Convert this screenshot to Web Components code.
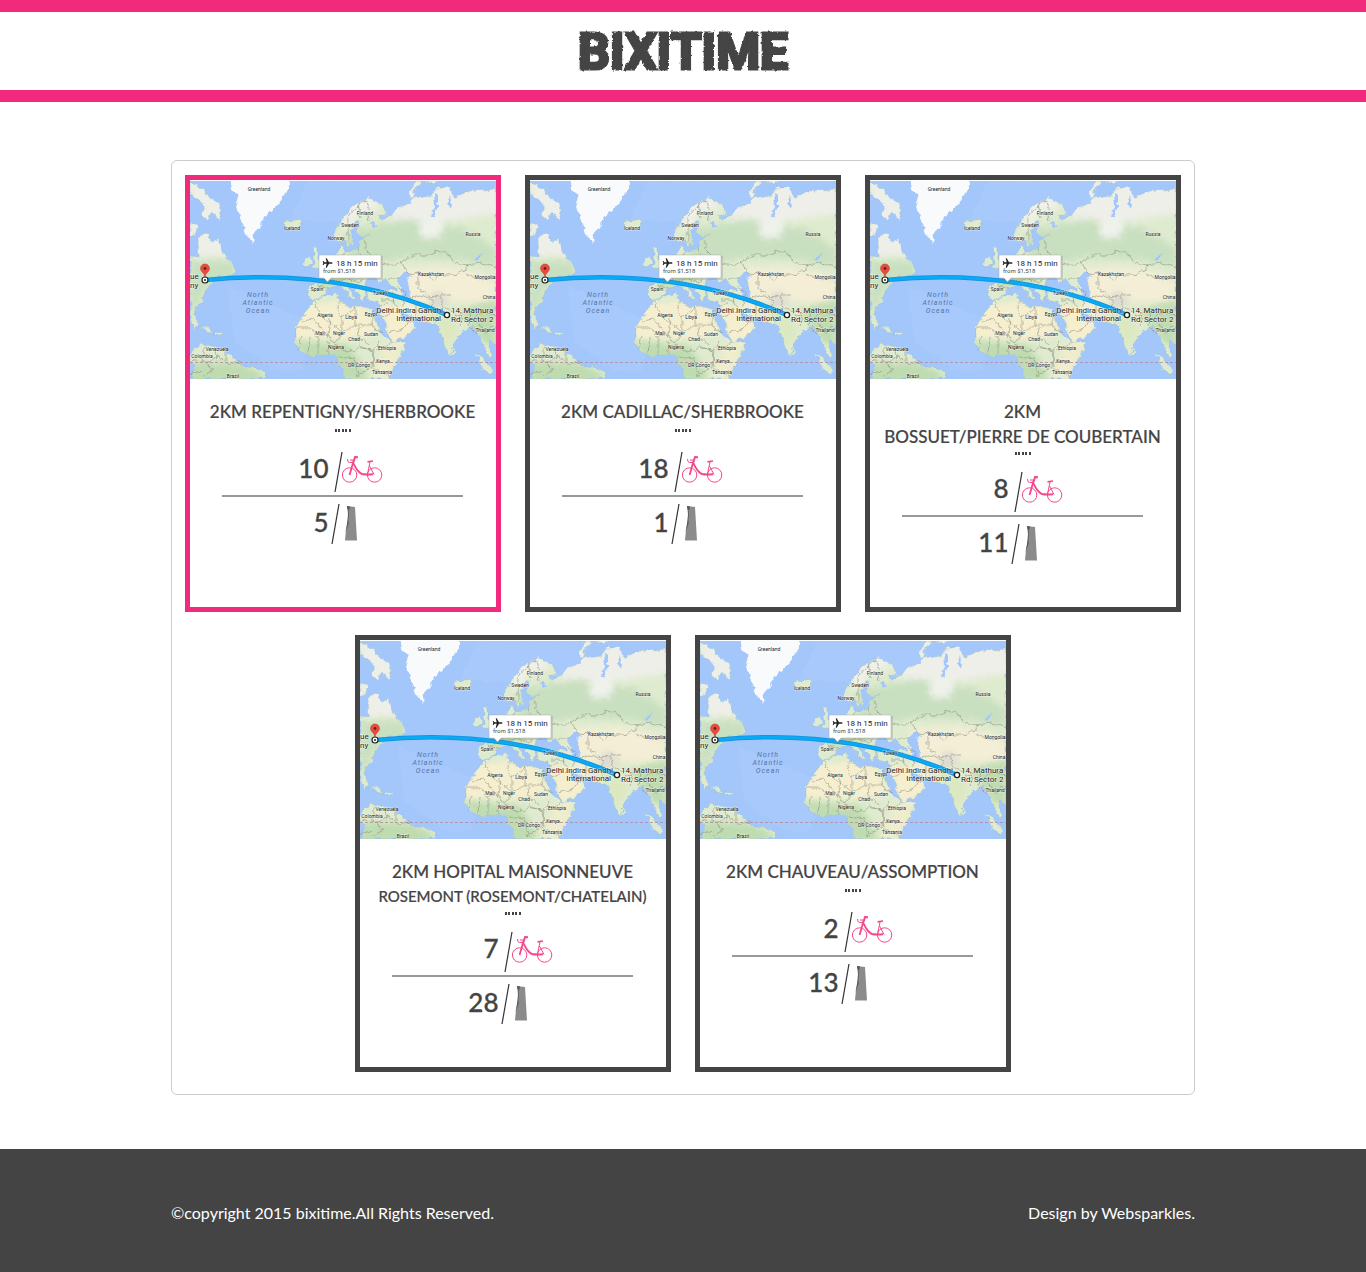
<!DOCTYPE html>
<html lang="en">
<head>
<meta charset="utf-8">
<meta name="viewport" content="width=device-width, initial-scale=1">
<title>Bixitime</title>
<style>
body{margin:0;background:#fff;color:#444;font-family:Lato,"Open Sans",sans-serif;--pink:#f22a7b;--dark:#444}
</style>
</head>
<body>
<bixi-header>BIXITIME</bixi-header>
<bixi-panel>
  <station-card active bikes="10" docks="5">2KM REPENTIGNY/SHERBROOKE</station-card>
  <station-card bikes="18" docks="1">2KM CADILLAC/SHERBROOKE</station-card>
  <station-card two-line bikes="8" docks="11">2KM<br>BOSSUET/PIERRE DE COUBERTAIN</station-card>
  <station-card two-line bikes="7" docks="28">2KM HOPITAL MAISONNEUVE<span slot="sub">ROSEMONT (ROSEMONT/CHATELAIN)</span></station-card>
  <station-card bikes="2" docks="13">2KM CHAUVEAU/ASSOMPTION</station-card>
</bixi-panel>
<bixi-footer><span>©copyright 2015 bixitime.All Rights Reserved.</span><span slot="credit">Design by Websparkles.</span></bixi-footer>

<template id="header-t">
<style>
:host{display:flex;justify-content:center;align-items:center;box-sizing:border-box;height:102px;padding-top:3px;border:solid var(--pink);border-width:12px 0}
h1{margin:0;font:bold 50px/75px Roboto,sans-serif;color:var(--dark);-webkit-text-stroke:3px var(--dark);filter:url(#rough)}
svg{position:absolute}
</style>
<svg width="0" height="0" aria-hidden="true"><filter id="rough" x="-5%" y="-5%" width="110%" height="110%"><feTurbulence type="fractalNoise" baseFrequency=".3" numOctaves="2" seed="4"/><feDisplacementMap in="SourceGraphic" scale="3" xChannelSelector="R" yChannelSelector="G"/></filter></svg>
<h1><slot></slot></h1>
</template>

<template id="panel-t">
<style>
:host{display:flex;flex-wrap:wrap;justify-content:center;gap:23px 24px;box-sizing:border-box;max-width:1024px;margin:58px auto 54px;padding:14px 13px 22px 12px;border:1px solid #ccc;border-radius:6px}
</style>
<slot></slot>
</template>

<template id="footer-t">
<style>
:host{display:block;background:var(--dark);color:#fff;font-size:16px;line-height:20px;padding:54px 24px 49px}
div{max-width:1024px;margin:auto;display:flex;justify-content:space-between}
</style>
<div><slot></slot><slot name="credit"></slot></div>
</template>

<template id="card-t">
<style>
:host{display:block;box-sizing:border-box;width:316px;min-height:437px;border:5px solid var(--dark);padding-top:1px}
:host([active]){border-color:var(--pink)}
h2{margin:20px 0 0;font-size:17px;line-height:25px;font-weight:500;text-align:center;-webkit-text-stroke:.2px}
h2 ::slotted(span){display:block}
slot[name=sub]{font-size:15px}
.dots{display:flex;justify-content:space-between;align-items:center;width:16px;height:12px;margin:0 auto 16px}
:host([two-line]) .dots{height:8px;margin-bottom:15px}
.dots i{width:2px;height:3px;background:var(--dark)}
.row{display:grid;grid-template-columns:141px 1fr;height:40px}
.row b{padding-right:2px;font-size:26px;line-height:36px;font-weight:500;text-align:right;-webkit-text-stroke:.3px}
.row.bikes b{line-height:32px}
.row svg{display:block}
hr{width:241px;height:2px;margin:3px auto 7px;border:0;background:#999}
</style>
<route-map></route-map>
<h2><slot></slot><slot name="sub"></slot></h2>
<div class="dots"><i></i><i></i><i></i><i></i><i></i></div>
<div class="row bikes"><b id="bikes"></b>
<svg width="60" height="40" fill="none" stroke="#f5478c" role="img" aria-label="bikes"><path d="M11 0L4 40" stroke="#333" stroke-width="1.2"/><circle cx="18.600" cy="23" r="7.200"/><circle cx="43.600" cy="23" r="7.200"/><path d="M18.600 23L22.500 9" stroke-width="1.800"/><path d="M22 10.500C24 14 26 20 31 22q3 .8 11 .3" stroke-width="1.900"/><path d="M27 5.200l-3-.2-1.500 5" stroke-width="2"/><path d="M16.500 7q0 3.500 2 3.500h3.500M19 8h3M39 10l-2.500 12M38.500 14l4.500 8.500" stroke-width="1"/><path d="M36.500 9.800l5.500-.8" stroke-width="1.700"/></svg></div>
<hr>
<div class="row"><b id="docks"></b>
<svg width="60" height="40" role="img" aria-label="docks"><path d="M8 0L1 40" stroke="#333" stroke-width="1.200"/><path d="M16 2l8 1 2 33.500H14l1-11 2.500-10z" fill="#8b8b8b"/><path d="M16 2l3 .500-1 4L17.500 20 14.500 28l1.500-8 1.500-14-1-1z" fill="#555"/></svg></div>
</template>

<template id="map-t">
<style>
:host{display:block}
svg{display:block;width:100%;height:198px;font-family:Roboto,sans-serif}
.s{font-size:5px;fill:#222;text-anchor:middle;stroke:#fff;stroke-width:1px;stroke-opacity:.5;paint-order:stroke}
.o{font-size:7px;font-style:italic;fill:#5673a5;text-anchor:middle;letter-spacing:1px}
.p{font-size:8px;fill:#222;stroke:#fff;stroke-width:1px;stroke-opacity:.6;paint-order:stroke}
</style>
<svg viewBox="0 0 306 198" preserveAspectRatio="xMidYMid slice" role="img" aria-label="Route map">
<defs>
<filter id="coast" x="0" y="0" width="100%" height="100%"><feTurbulence type="fractalNoise" baseFrequency=".16" numOctaves="3" seed="8"/><feDisplacementMap in="SourceGraphic" scale="6" xChannelSelector="R" yChannelSelector="G"/></filter>
<filter id="soft" x="-30%" y="-30%" width="160%" height="160%"><feGaussianBlur stdDeviation="3"/></filter>
<clipPath id="land"><path id="shape" d="M0 2L8 4 18 14 28 22 31 32 28 40 22 32 18 39 11 33 16 26 8 19 0 12zM0 40l8 5-3 8-5 2zM0 75L9 76 8 56 16 52 23 61 28 57 31 67 41 82 48 91 38 95 28 96 20 104 15 110 12 119 4 129 8 144 5 148 0 138zM8 147l8 0 8 4-4 0zM25 151l7 1-2 2-5 0zM0 171L11 162 21 166 34 169 46 179 53 186 64 186 76 191 74 198H4L2 194 6 184 0 180zM94 42l4-3 5 2 6-2 3 5-6 5-9-1zM123 66l5-1 0 9 4 9-1 5-9-1 3-5zM116 78l5-2 1 6-5 4-3-3zM124 120L135 115 148 112 150 121 160 127 170 125 182 129 186 139 190 151 200 161 216 161 214 167 203 189 199 198H156L154 192 148 182V176L138 172 124 176 111 171 104 162 106 156V146L112 136zM119 104L118 116 126 119 134 115 138 107 146 105 152 105 160 116 165 119 161 110 156 103 160 103 168 112 172 120 176 115 175 107 178 96 186 97 190 101 196 97 202 105 207 109 176 110 177 119 188 121 189 129 196 146 201 162 213 157 226 147 222 141 213 139 208 130 214 131 224 138 240 142 248 145 250 152 255 165 260 175 264 168 266 158 276 148 284 146 289 155 294 166 300 178 303 174 298 164 300 158 306 164V8L279 10 263 16 260 6 246 6 242 14 234 15 223 17 218 22 209 27 199 34 191 40 187 36 194 34 198 32 190 22 179 17 166 22 153 36 144 54 148 60 154 57 158 67 163 62 161 50 166 40 170 39 166 50 170 56 180 54 170 60 168 68 155 71 150 64 149 71 140 82 130 87 136 91 134 103zM219 12L226 0h7l-8 7-3 11zM285 172l7 4 11 13-2 5-9-7zM262 168l3 2 0 4-3 0zM236 0h12l-3 4z"/></clipPath>
</defs>
<rect width="306" height="198" fill="#a3c7fb"/>
<g filter="url(#coast)">
<path d="M116 0h110v40H100zM38 105l80 35-5 50H84l-40-30z" fill="#acccfd" opacity=".4"/>
<path d="M39 -5L41 9 49 14 46 22 49 32 53 46 56 54 63 62 64 52 71 44 74 36 86 26 91 17 99 9V-5z" fill="#f8fafb"/>
<g clip-path="url(#land)">
<rect width="306" height="200" fill="#dfebcf"/>
<g filter="url(#soft)">
<path d="M0 0h40v75H0zM200 0h110v32l-50 8-60 5z" fill="#eeefe8"/>
<path d="M150 20l30-8 10 14-22 8-14 20z" fill="#f0f1ea"/>
<path d="M0 80h45v20L16 106 0 140zM155 50l60-12 60 10 31 20v18l-40-8-48-2-58 10z" fill="#c9e0c0"/>
<path d="M100 124l70-4 20 30-20 7h-66zM190 125l40 2-10 35h-20z" fill="#f6efcf"/>
<path d="M210 88l50-2 30 6 16 12v16l-32 2-30-5-30 14z" fill="#f3eed5"/>
<path d="M100 160l60 4 20 36h-40zM0 180l50 2 25 12-10 8H0zM120 90l50-12v20l-40 10zM270 128l36-10v50l-16-10z" fill="#bfdcb1"/>
<path d="M195 165l20-2-17 36h-18z" fill="#efedcc"/>
<path d="M238 120l30 25-10 25-10-20z" fill="#dce8bf"/>
<circle cx="248" cy="119" r="9" fill="#dedbd1"/>
<path d="M228 45l14-10 12 8-4 14-18 0z" fill="#eff2eb"/>
</g>
<path d="M210 95l7-5 4 5-5 4 5 12-2 8-7-3 0-9-4-6zM226 90h5l-2 5zM244 12l4 2 0 14-5 8-3-2 5-8zM257 22l3-8 2 10-2 3zM285 78l9-6-5 8zM181 42l4-2 1 4-3 1z" fill="#a3c7fb"/>
</g>
<use href="#shape" fill="none" stroke="#8fb5c9" stroke-width=".6" opacity=".6"/>
<path d="M107 147l15 0 4 8 12-1 6 8 8-9 0-16 14-10M124 120l4 10 8 9 16 12 14-7V126M166 144l6 0 12 0M168 145l2 20 12 5 8-9M150 121l-4 7 6 9M140 137l-2 17M112 140l12-2 14 18M112 155l-4 14M120 157l-2 15M128 155l0 18M138 160l0 12M144 165l14 6 10-5 14 3 2 16M150 176l15 2 3 17 14-9 2-17M182 186l18 9M186 170l14-8M183 130l0 18 10 4 M168 157l12 6M0 178l18 3 10-6 10 8 12-2M14 165l0 16 10 8-10 6M26 170l2 10M36 172l0 8M0 194l12-5" fill="none" stroke="#898878" stroke-width=".65" opacity=".8"/>
<path d="M126 105l12 2M140 86l5 16 10-6 14 6 4-7M146 78l9 13 10-2 10 4M155 72v15l10 4M168 68l6 12-6 10M175 60l0 8 8 8 12 8 14 0M158 62l0-28 14-12M171 38l-3-15 8-4 4 20M198 97l12 0M207 105l8 5-2 15M202 109l2 12 8 14M192 119l12 0M188 124l10-1M192 135l16-4M199 152l16-5 4-7M218 92l-8-10 12-8 16 0 10-5 12 5 4 8 13 2-2 6-12 4-12 0-8 5-12-6zM228 96l0 12 12 8 10-2 10 0M218 118l14-4 12 6-4 8-14-6v14l13 3M240 128l6 14M250 115l4 12 18 8 6-7M276 84l16-2 14 5M276 92l14 7 16-2M272 134l-2 12M280 130l-2 14 9 9 M289 142l6 10 8-6 M284 136l9-4 13 3" fill="none" stroke="#898878" stroke-width=".7" opacity=".8"/>
</g>
<path d="M0 181.500h306" stroke="#b58996" stroke-dasharray="3 2" stroke-width=".8"/>
<g class="s">
<text x="69" y="10">Greenland</text><text x="102" y="49">Iceland</text><text x="175" y="34">Finland</text><text x="160" y="46">Sweden</text><text x="146" y="59">Norway</text><text x="283" y="55">Russia</text><text x="241" y="95">Kazakhstan</text><text x="295" y="98">Mongolia</text><text x="299" y="118">China</text><text x="295" y="151">Thailand</text><text x="127" y="110">Spain</text><text x="135" y="136">Algeria</text><text x="161" y="138">Libya</text><text x="181" y="135">Egypt</text><text x="130" y="154">Mali</text><text x="149" y="154">Niger</text><text x="164" y="160">Chad</text><text x="181" y="155">Sudan</text><text x="146" y="168">Nigeria</text><text x="197" y="169">Ethiopia</text><text x="169" y="186">DR Congo</text><text x="193" y="182">Kenya</text><text x="192" y="193">Tanzania</text><text x="27" y="170">Venezuela</text><text x="12" y="177">Colombia</text><text x="43" y="197">Brazil</text>
</g>
<g class="o"><text x="68" y="116">North</text><text x="68" y="124">Atlantic</text><text x="68" y="132">Ocean</text></g>
<path d="M15 99Q149 86 257 134" fill="none" stroke="#168fd9" stroke-width="4.600"/>
<path d="M15 99Q149 86 257 134" fill="none" stroke="#08a9f5" stroke-width="3.200"/>
<text class="s" x="190" y="114">Turkey</text>
<g class="p"><text x="0" y="98">ue</text><text x="0" y="107">ny</text><text x="253" y="132" text-anchor="end">Delhi Indira Gandhi</text><text x="251" y="140" text-anchor="end">International</text><text x="261" y="132">14, Mathura</text><text x="261" y="141">Rd, Sector 2</text></g>
<circle cx="15" cy="99" r="3" fill="#fff" stroke="#222" stroke-width="1.200"/><circle cx="15" cy="99" r="1" fill="#222"/>
<circle cx="257" cy="134" r="2.600" fill="#fff" stroke="#222" stroke-width="1.300"/>
<path d="M15 96.500C15 92 10.500 91 10.500 87.500a4.500 4.500 0 0 1 9 0C19.500 91 15 92 15 96.500z" fill="#e94b3f" stroke="#b8342c" stroke-width=".5"/><circle cx="15" cy="87.500" r="1.400" fill="#6f1d18"/>
<path d="M130 75h63v24h-51l-4 4-4-4h-5V74h64" fill="#777" opacity=".25"/>
<path d="M129 74h62v23h-50l-3.500 4-3.500-4h-5z" fill="#fff" stroke="#aaa" stroke-width=".5"/>
<path d="M142.500 82c0 .6-.5.800-1 .800h-2.500l-2.300 4h-1l1-4h-2.200l-1 1.300h-.8l.6-2.100-.6-2.100h.8l1 1.300h2.200l-1-4h1l2.300 4h2.500c.5 0 1 .2 1 .800z" fill="#222"/>
<text x="146" y="85" font-size="8" fill="#222">18 h 15 min</text><text x="133" y="92" font-size="6" fill="#37504a">from $1,518</text>
</svg>
</template>

<script>
class TemplateElement extends HTMLElement {
  constructor() {
    super();
    this.attachShadow({ mode: 'open' }).append(
      document.getElementById(this.constructor.template).content.cloneNode(true));
  }
}
customElements.define('bixi-header', class extends TemplateElement { static template = 'header-t'; });
customElements.define('bixi-panel', class extends TemplateElement { static template = 'panel-t'; });
customElements.define('bixi-footer', class extends TemplateElement { static template = 'footer-t'; });
customElements.define('route-map', class extends TemplateElement { static template = 'map-t'; });
customElements.define('station-card', class extends TemplateElement {
  static template = 'card-t';
  connectedCallback() {
    for (const key of ['bikes', 'docks'])
      this.shadowRoot.getElementById(key).textContent = this.getAttribute(key);
  }
});
</script>
</body>
</html>
